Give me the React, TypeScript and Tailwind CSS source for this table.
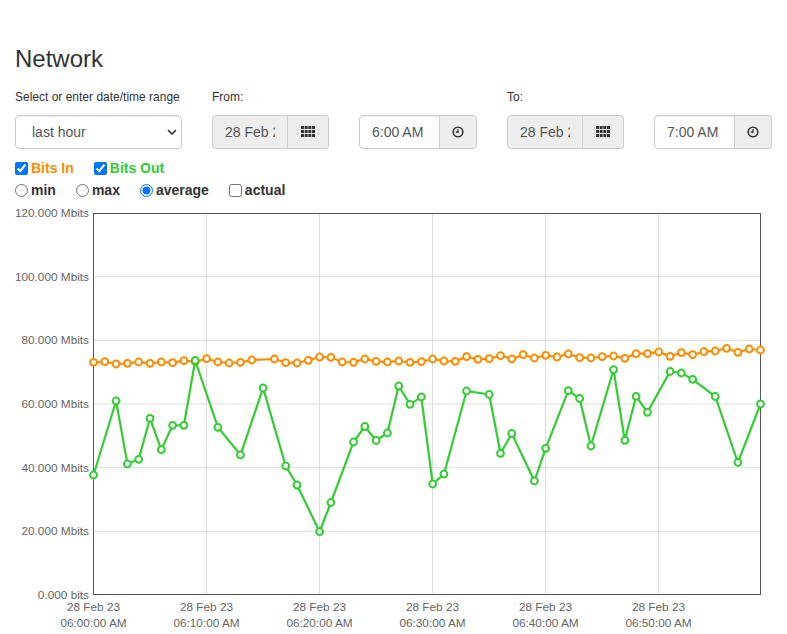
import React from 'react';

const ORANGE = '#ff8c00';
const GREEN = '#32cd32';

// Chart frame, in page pixels (the svg's viewBox uses page coordinates)
const X0 = 93.5;
const X1 = 760.5;
const Y0 = 595;
const Y1 = 213;
const MAX = 120;
const N = 60;

const bitsIn: (number | null)[] = [
  73.1, 73.29, 72.57, 72.79, 73.19, 72.79, 73.19, 72.97, 73.6, 73.29,
  74.23, 73.19, 72.88, 73.1, 73.82, null, 74.14, 72.97, 72.88, 73.73,
  74.76, 74.67, 73.19, 73.1, 74.14, 73.41, 73.19, 73.51, 73.1, 73.29,
  74.14, 73.51, 73.41, 74.86, 74.04, 74.23, 75.17, 74.14, 75.49, 74.45,
  75.3, 74.76, 75.71, 74.54, 74.45, 74.86, 75.08, 74.36, 75.8, 75.8,
  76.34, 74.98, 76.12, 75.49, 76.43, 76.65, 77.5, 76.24, 77.28, 76.96,
];

const bitsOut: (number | null)[] = [
  37.7, null, 60.94, 41.15, 42.63, 55.51, 45.64, 53.31, 53.31, 73.67,
  null, 52.68, null, 43.98, null, 65.03, null, 40.52, 34.55, null,
  19.88, 29.06, null, 48.06, 52.93, 48.53, 50.89, 65.65, 59.91, 62.2,
  34.87, 38.01, null, 64.08, null, 62.98, 44.51, 50.73, null, 35.81,
  46.08, null, 64.18, 61.73, 46.81, null, 70.78, 48.6, 62.42, 57.39,
  null, 70.21, 69.74, 67.76, null, 62.36, null, 41.62, null, 60.0,
];

const yTicks = [
  { v: 120, label: '120.000 Mbits' },
  { v: 100, label: '100.000 Mbits' },
  { v: 80, label: '80.000 Mbits' },
  { v: 60, label: '60.000 Mbits' },
  { v: 40, label: '40.000 Mbits' },
  { v: 20, label: '20.000 Mbits' },
  { v: 0, label: '0.000 bits' },
];

const xTicks = ['06:00:00 AM', '06:10:00 AM', '06:20:00 AM', '06:30:00 AM', '06:40:00 AM', '06:50:00 AM'];

const px = (i: number) => X0 + (i * (X1 - X0)) / (N - 1);
const py = (v: number) => Y0 - (v / MAX) * (Y0 - Y1);

function Series({ data, color }: { data: (number | null)[]; color: string }) {
  const pts = data
    .map((v, i) => (v == null ? null : [px(i), py(v)]))
    .filter((p): p is number[] => p !== null);
  const d = pts.map(([x, y], k) => `${k === 0 ? 'M' : 'L'}${x.toFixed(1)},${y.toFixed(1)}`).join(' ');
  return (
    <g>
      <path d={d} fill="none" stroke={color} strokeWidth={2.2} />
      {pts.map(([x, y], k) => (
        <circle key={k} cx={x} cy={y} r={3.4} fill="#fff" stroke={color} strokeWidth={2} />
      ))}
    </g>
  );
}

function Chart() {
  return (
    <svg
      className="mt-[4px] block"
      width={787}
      height={427}
      viewBox="0 205 787 427"
      fontFamily="'Liberation Sans', Arial, sans-serif"
    >
      {/* grid */}
      {yTicks.slice(1, -1).map((t) => (
        <line key={t.v} x1={X0} x2={X1} y1={py(t.v)} y2={py(t.v)} stroke="#ddd" strokeWidth={1} />
      ))}
      {xTicks.slice(1).map((_, k) => (
        <line key={k} x1={X0 + (k + 1) * 113} x2={X0 + (k + 1) * 113} y1={Y1} y2={Y0} stroke="#ddd" strokeWidth={1} />
      ))}
      <rect x={X0} y={Y1 + 0.5} width={X1 - X0} height={Y0 - Y1 - 1} fill="none" stroke="#555" strokeWidth={1} />

      {yTicks.map((t) => (
        <text key={t.v} x={89} y={py(t.v) + 4} textAnchor="end" fontSize={11.8} fill="#666">
          {t.label}
        </text>
      ))}
      {xTicks.map((t, k) => (
        <text key={t} x={X0 + k * 113} textAnchor="middle" fontSize={11.8} fill="#666">
          <tspan x={X0 + k * 113} y={611}>28 Feb 23</tspan>
          <tspan x={X0 + k * 113} y={627}>{t}</tspan>
        </text>
      ))}

      <Series data={bitsIn} color={ORANGE} />
      <Series data={bitsOut} color={GREEN} />
    </svg>
  );
}

function GridIcon() {
  const cols = [0, 3.67, 7.33, 11];
  const rows = [0, 4, 8];
  return (
    <svg width={14} height={11} viewBox="0 0 14 11" className="-mt-[2px]">
      {rows.map((y) =>
        cols.map((x) => <rect key={`${x}-${y}`} x={x} y={y} width={3} height={3} fill="#333" />),
      )}
    </svg>
  );
}

function ClockIcon() {
  return (
    <svg width={12} height={12} viewBox="0 0 12 12">
      <circle cx={6} cy={6} r={4.8} fill="none" stroke="#333" strokeWidth={1.6} />
      <path d="M6 3.2V6H3.8" fill="none" stroke="#333" strokeWidth={1.4} />
    </svg>
  );
}

function DateGroup() {
  return (
    <div className="flex h-[34px]">
      <input
        readOnly
        value="28 Feb 2023"
        className="h-[34px] w-[76px] rounded-l-[4px] border border-[#ccc] bg-[#eee] px-[12px] text-[14px] text-[#555] outline-none"
      />
      <span className="flex h-[34px] w-[41px] items-center justify-center rounded-r-[4px] border border-l-0 border-[#ccc] bg-[#eee]">
        <GridIcon />
      </span>
    </div>
  );
}

function TimeGroup({ value }: { value: string }) {
  return (
    <div className="flex h-[34px]">
      <input
        readOnly
        value={value}
        className="h-[34px] w-[81px] rounded-l-[4px] border border-[#ccc] bg-white px-[12px] text-[14px] text-[#555] shadow-[inset_0_1px_1px_rgba(0,0,0,0.075)] outline-none"
      />
      <span className="flex h-[34px] w-[37px] items-center justify-center rounded-r-[4px] border border-l-0 border-[#ccc] bg-[#eee]">
        <ClockIcon />
      </span>
    </div>
  );
}

export default function App() {
  return (
    <div className="min-h-[634px] bg-white font-['Liberation_Sans',Arial,sans-serif] text-[#333]">
      <div className="px-[15px] pt-[46px]">
        <h3 className="text-[24px] leading-[26px] font-normal">Network</h3>

        <div className="mt-[17px] flex gap-[30px]">
          <div className="w-[167px]">
            <div className="text-[12px] leading-[17px]">Select or enter date/time range</div>
            <div className="relative mt-[9px]">
              <select
                defaultValue="hour"
                className="h-[34px] w-[167px] appearance-none rounded-[4px] border border-[#ccc] bg-white pl-[16px] text-[14px] text-[#555] shadow-[inset_0_1px_1px_rgba(0,0,0,0.075)] outline-none"
              >
                <option value="hour">last hour</option>
                <option value="day">last day</option>
                <option value="week">last week</option>
              </select>
              <svg
                width={10}
                height={6}
                viewBox="0 0 10 6"
                className="pointer-events-none absolute right-[5px] top-[14px]"
              >
                <path d="M1 1l4 4 4-4" fill="none" stroke="#333" strokeWidth={1.6} />
              </svg>
            </div>
          </div>

          <div>
            <div className="text-[12px] leading-[17px]">From:</div>
            <div className="mt-[9px] flex gap-[30px]">
              <DateGroup />
              <TimeGroup value="6:00 AM" />
            </div>
          </div>

          <div>
            <div className="text-[12px] leading-[17px]">To:</div>
            <div className="mt-[9px] flex gap-[30px]">
              <DateGroup />
              <TimeGroup value="7:00 AM" />
            </div>
          </div>
        </div>

        <div className="mt-[9px] flex h-[20px] items-center gap-[20px] text-[14px] leading-[20px] font-bold">
          <label className="flex items-center gap-[3px] text-[#ff8c00]">
            <input type="checkbox" defaultChecked className="h-[13px] w-[13px]" />
            Bits In
          </label>
          <label className="flex items-center gap-[3px] text-[#32cd32]">
            <input type="checkbox" defaultChecked className="h-[13px] w-[13px]" />
            Bits Out
          </label>
        </div>

        <div className="mt-[2px] flex h-[20px] items-center gap-[20px] text-[14px] leading-[20px] font-bold">
          <label className="flex items-center gap-[3px]">
            <input type="radio" name="agg" className="h-[13px] w-[13px]" />
            min
          </label>
          <label className="flex items-center gap-[3px]">
            <input type="radio" name="agg" className="h-[13px] w-[13px]" />
            max
          </label>
          <label className="flex items-center gap-[3px]">
            <input type="radio" name="agg" defaultChecked className="h-[13px] w-[13px]" />
            average
          </label>
          <label className="flex items-center gap-[3px]">
            <input type="checkbox" className="h-[13px] w-[13px]" />
            actual
          </label>
        </div>
      </div>

      <div className="pt-[1px]">
        <Chart />
      </div>
    </div>
  );
}
